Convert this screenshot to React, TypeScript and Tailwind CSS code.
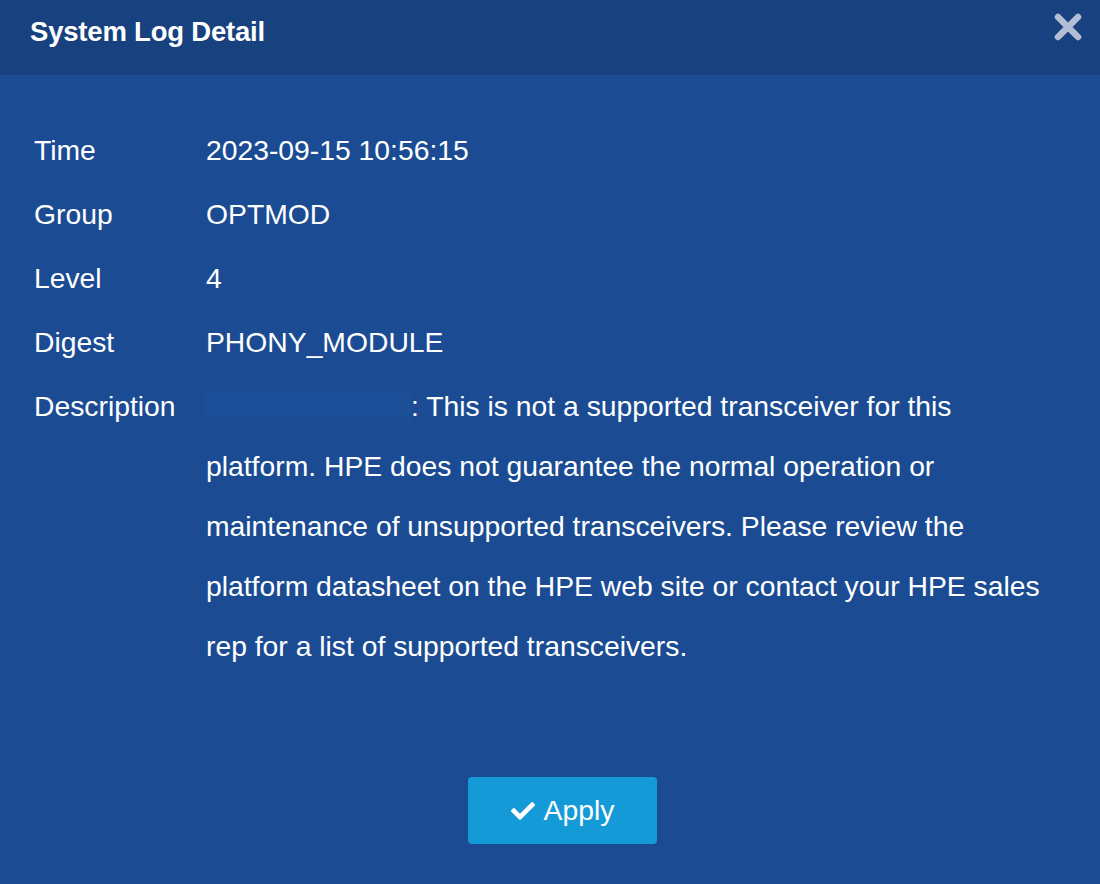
import { FaCheck } from 'react-icons/fa';

const rows: { label: string; value: string }[] = [
  { label: 'Time', value: '2023-09-15 10:56:15' },
  { label: 'Group', value: 'OPTMOD' },
  { label: 'Level', value: '4' },
  { label: 'Digest', value: 'PHONY_MODULE' },
];

export default function App() {
  return (
    <div className="w-[1100px] h-[884px] bg-[#1b4c93] text-white font-['Liberation_Sans',Arial,sans-serif] flex flex-col overflow-hidden">
      <div className="h-[75px] bg-[#17417f] flex items-center justify-between pl-[30px] pr-[16px] shrink-0">
        <h2 className="text-[27.5px] font-bold tracking-[-0.2px] -mt-[12px]">System Log Detail</h2>
        <button className="-mt-[22px] w-[32px] h-[32px] flex items-center justify-center">
          <svg width="30" height="30" viewBox="0 0 30 30">
            <path d="M5 5 L25 25 M25 5 L5 25" stroke="#b3bdd3" strokeWidth="6.5" strokeLinecap="round" />
          </svg>
        </button>
      </div>

      <div className="pt-[45px] pl-[34px] grid grid-cols-[172px_842px] gap-y-[4px] text-[28.3px] leading-[60px]">
        {rows.map((r) => (
          <div key={r.label} className="contents">
            <div>{r.label}</div>
            <div>{r.value}</div>
          </div>
        ))}
        <div>Description</div>
        <div>
          <span className="inline-block align-middle w-[205px] h-[32px] -mt-[6px] bg-[#1b4e97]" />
          : This is not a supported transceiver for this platform. HPE does not guarantee the normal operation or maintenance of unsupported transceivers. Please review the platform datasheet on the HPE web site or contact your HPE sales rep for a list of supported transceivers.
        </div>
      </div>

      <div className="mt-[101px] flex justify-center pl-[25px]">
        <button className="w-[189px] h-[67px] rounded-[4px] bg-[#159ad8] flex items-center justify-center gap-[9px] text-[28.3px]">
          <FaCheck className="w-[24px] h-[24px]" />
          <span>Apply</span>
        </button>
      </div>
    </div>
  );
}
